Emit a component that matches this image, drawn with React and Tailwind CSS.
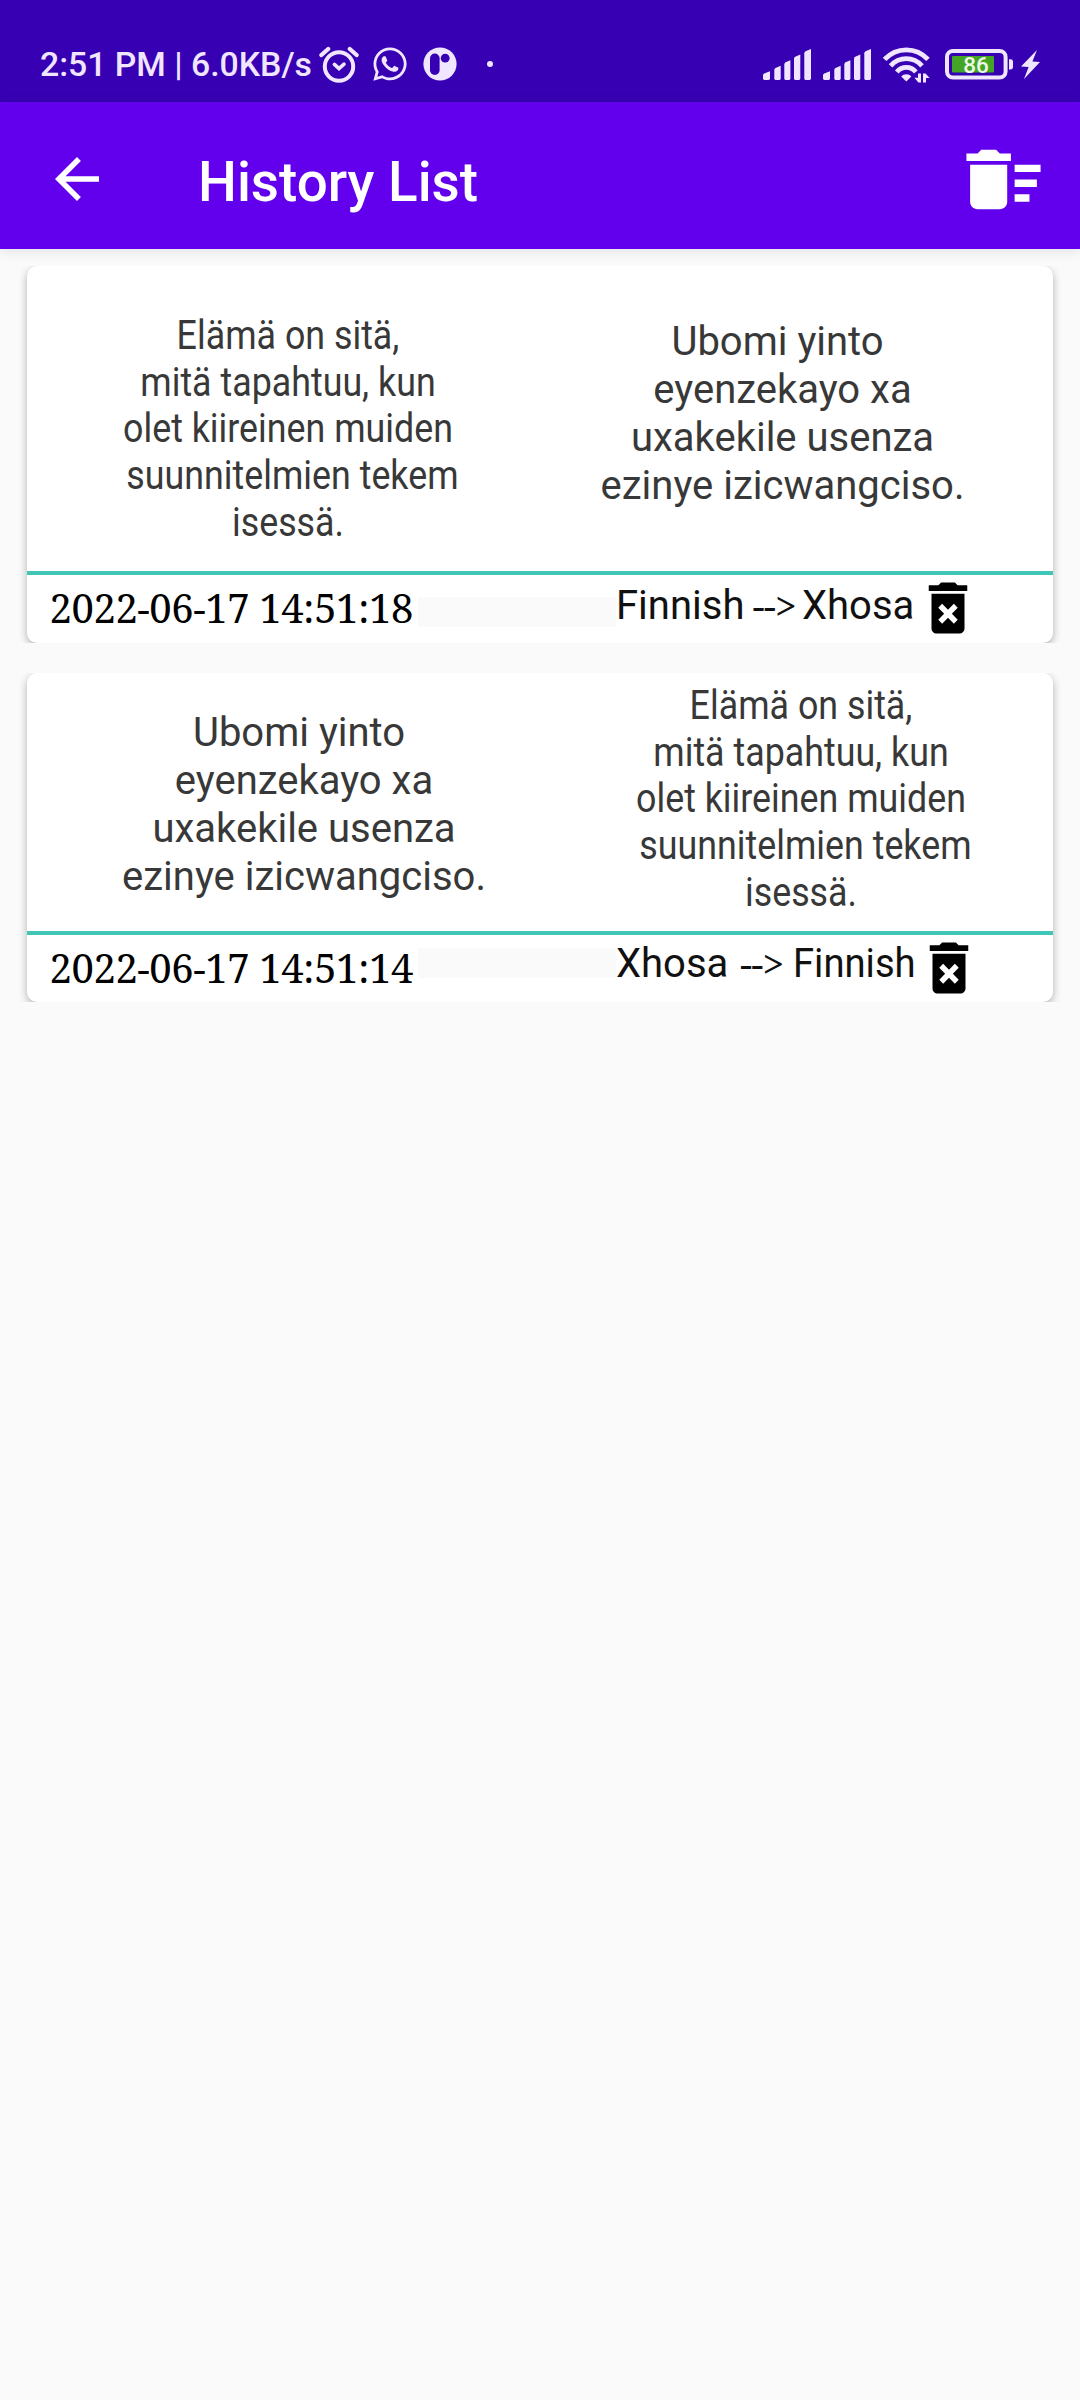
import React, { useState } from 'react'
import { FaWhatsapp } from 'react-icons/fa'
import { MdArrowBack, MdDeleteSweep } from 'react-icons/md'

const FINNISH = ['Elämä on sitä,', 'mitä tapahtuu, kun', 'olet kiireinen muiden', ' suunnitelmien tekem', 'isessä.']
const XHOSA = ['Ubomi yinto ', 'eyenzekayo xa', 'uxakekile usenza', 'ezinye izicwangciso.']

const finnishText = 'text-[40px] leading-[46.7px] scale-x-[0.895]'
const xhosaText = 'text-[40px] leading-[47.9px]'

const initialHistory = [
  {
    id: 2,
    date: '2022-06-17 14:51:18',
    from: 'Finnish',
    to: 'Xhosa',
    source: FINNISH,
    target: XHOSA,
    bodyClass: 'h-[305px] grid-cols-[522px_467px]',
    sourceClass: `${finnishText} pt-[47px]`,
    targetClass: `${xhosaText} pt-[52px]`,
    footerClass: 'h-[68px]',
    stripClass: 'mt-[22px] w-[198px]',
    labelClass: 'mt-[11px]',
    fromClass: 'w-[136.5px]',
    arrowClass: 'w-[49.500px]',
    toClass: 'w-[113px]',
  },
  {
    id: 1,
    date: '2022-06-17 14:51:14',
    from: 'Xhosa',
    to: 'Finnish',
    source: XHOSA,
    target: FINNISH,
    bodyClass: 'h-[258px] grid-cols-[554px_440px]',
    sourceClass: `${xhosaText} pt-[36px]`,
    targetClass: `${finnishText} pt-[10px]`,
    footerClass: 'h-[67px]',
    stripClass: 'mt-[13px] w-[198px]',
    labelClass: 'mt-[9px]',
    fromClass: 'w-[124px]',
    arrowClass: 'w-[52.500px]',
    toClass: 'w-[123px] origin-left scale-x-[0.955]',
  },
]

const AlarmIcon = () => (
  <svg className="w-[40px] h-[37px]" viewBox="0 0 40 37" fill="none" stroke="currentColor">
    <circle cx="20" cy="20.5" r="14.2" strokeWidth="4" />
    <path d="M2.4 9 9.2 3M37.6 9 30.8 3" strokeWidth="4.2" strokeLinecap="round" />
    <path d="m15.4 18.4 4.6 4.2 5-4.4" strokeWidth="3.6" strokeLinecap="round" />
  </svg>
)

const AppIcon = () => (
  <svg className="w-[34px] h-[34px]" viewBox="0 0 34 34">
    <circle cx="17" cy="17" r="16.6" fill="currentColor" />
    <rect x="7" y="6.5" width="9.6" height="21.5" rx="4.8" fill="#3700b3" />
    <circle cx="22.2" cy="11.2" r="4.4" fill="#3700b3" />
  </svg>
)

const SignalIcon = () => (
  <svg className="w-[48px] h-[31px]" viewBox="0 0 48 31" fill="currentColor">
    <path d="M0 26.2Q0 25 1.2 24.5L7 22.3V29.6Q7 31 5.6 31H1.4Q0 31 0 29.6Z" />
    <path d="M11.3 21Q11.3 19.6 12.5 19L17.7 16.8V29.6Q17.7 31 16.4 31H12.6Q11.3 31 11.3 29.6Z" />
    <path d="M21.3 15.4Q21.3 14 22.5 13.3L27.4 11.2V29.6Q27.4 31 26 31H22.6Q21.3 31 21.3 29.6Z" />
    <path d="M31 9.8Q31 8.4 32.2 7.7L37.3 5.4V29.6Q37.3 31 36 31H32.3Q31 31 31 29.6Z" />
    <path d="M41.3 4.2Q41.3 3 42.5 2.2L48 0V29.6Q48 31 46.6 31H42.6Q41.3 31 41.3 29.6Z" />
  </svg>
)

const WifiIcon = () => (
  <svg className="w-[47px] h-[36px]" viewBox="0 0 47 36">
    <g fill="none" stroke="currentColor" strokeWidth="4.8">
      <path d="M1.6 12.4Q10.5 2.8 23.3 2.8T45 12.4" />
      <path d="M7.6 18.8Q14 11.6 23.3 11.6T39 18.8" />
      <path d="M13.8 25Q17.6 20.4 23.3 20.4T32.8 25" />
    </g>
    <path d="M18.2 29.6Q20 27.2 23.3 27.2T28.4 29.6L23.3 34.6Z" fill="currentColor" />
    <path d="M35 26.4h3v9h-2.6l-4-4.6H35ZM40 35.4v-9h2.6l4 4.6H43v4.4Z" fill="currentColor" />
  </svg>
)

const BatteryIcon = () => (
  <svg className="w-[69px] h-[31px]" viewBox="0 0 69 31">
    <rect x="2" y="2" width="58.6" height="26.6" rx="6" fill="none" stroke="currentColor" strokeWidth="4" />
    <path d="M64 10.2h1.4q2.6 0 2.6 2.6v5q0 2.6-2.6 2.6H64Z" fill="currentColor" />
    <rect x="7" y="7" width="42" height="16.4" rx="1" fill="#43a526" />
    <text x="31" y="23.6" textAnchor="middle" fill="#eef8e8" className="font-['Roboto'] text-[22.5px] font-medium">
      86
    </text>
  </svg>
)

const TrashIcon = () => (
  <svg className="w-[66px] h-[68px]" viewBox="0 0 24 24" preserveAspectRatio="none" fill="#000">
    <path d="M6 19.2c0 1 .8 1.8 2 1.8h8c1.2 0 2-.8 2-1.8V7H6v12.2zm2.46-7.32 1.41-1.41L12 12.59l2.12-2.12 1.41 1.41L13.41 14l2.12 2.12-1.41 1.41L12 15.41l-2.12 2.12-1.41-1.41L10.59 14l-2.13-2.12zM15.5 4l-1-1h-5l-1 1H5v2h14V4z" />
  </svg>
)

const StatusBar = () => (
  <div className="h-[102px] bg-[#3700b3] text-[#f1e6ff] flex items-start">
    <span className="ml-[40px] mt-[48px] w-[278.5px] text-[33.75px] leading-none font-medium whitespace-nowrap">
      2:51 PM | 6.0KB/s
    </span>
    <div className="mt-[46px]">
      <AlarmIcon />
    </div>
    <FaWhatsapp className="ml-[12px] mt-[45px] w-[38px] h-[38px]" />
    <div className="ml-[14px] mt-[47px]">
      <AppIcon />
    </div>
    <div className="ml-[30px] mt-[61px] w-[6px] h-[6px] rounded-full bg-[#f1e6ff]" />

    <div className="ml-auto mr-[40px] flex items-start">
      <div className="mt-[49px] flex gap-[12px]">
        <SignalIcon />
        <SignalIcon />
      </div>
      <div className="ml-[12px] mt-[47px]">
        <WifiIcon />
      </div>
      <div className="ml-[15px] mt-[49px]">
        <BatteryIcon />
      </div>
      <svg className="ml-[7px] mt-[50px] w-[19px] h-[29px]" viewBox="0 0 19 29" fill="currentColor">
        <path d="M16 0 0 16.5 7.6 17 3 29 19 12 11.4 11.5Z" />
      </svg>
    </div>
  </div>
)

const AppBar = ({ onClear }) => (
  <div className="h-[147px] bg-[#6200ee] text-white flex items-start shadow-[0_2px_12px_rgba(0,0,0,0.1)]">
    <button className="ml-[44px] mt-[44px]">
      <MdArrowBack className="w-[66px] h-[66px]" />
    </button>
    <h1 className="ml-[88px] mt-[53px] text-[54.8px] leading-[55px] font-medium">History List</h1>
    <button className="ml-auto mr-[32px] mt-[32.5px]" onClick={onClear}>
      <MdDeleteSweep className="w-[89px] h-[89px]" />
    </button>
  </div>
)

const Lines = ({ lines, className }) => (
  <div className={`text-center whitespace-pre text-[#383838] ${className}`}>
    {lines.map((line) => (
      <p key={line}>{line}</p>
    ))}
  </div>
)

const HistoryCard = ({ item, onDelete }) => (
  // The row clips the card's shadow at its top and bottom edge
  <div className="mx-[19px] px-[8px] overflow-hidden">
    <div className="bg-white rounded-[10px] shadow-[0_3px_9px_rgba(0,0,0,0.3)]">
      <div className={`grid ${item.bodyClass}`}>
        <Lines lines={item.source} className={item.sourceClass} />
        <Lines lines={item.target} className={item.targetClass} />
      </div>
      <div className="h-[4px] bg-[#40c6b6]" />
      <div className={`flex items-start text-[40px] leading-none text-[#111111] whitespace-nowrap ${item.footerClass}`}>
        <span className="ml-[22.5px] mt-[13px] w-[368.5px] tracking-[-0.4px] text-black font-['Noto_Serif',serif]">
          {item.date}
        </span>
        <div className={`h-[30px] bg-[#fafafa] ${item.stripClass}`} />
        <span className={`${item.labelClass} ${item.fromClass}`}>{item.from}</span>
        <span className={`text-[39px] leading-[38px] tracking-[-0.8px] font-['Noto_Serif',serif] ${item.labelClass} ${item.arrowClass}`}>
          {'-->'}
        </span>
        <span className={`${item.labelClass} ${item.toClass}`}>{item.to}</span>
        <button className="-mt-px" onClick={() => onDelete(item.id)}>
          <TrashIcon />
        </button>
      </div>
    </div>
  </div>
)

const App = () => {
  const [history, setHistory] = useState(initialHistory)

  const handleDelete = (id) => {
    setHistory(history.filter((item) => item.id !== id))
  }

  return (
    <div className="w-[1080px] h-[2400px] bg-[#fafafa] font-['Roboto',sans-serif]">
      <StatusBar />
      <AppBar onClear={() => setHistory([])} />
      <div className="pt-[17px] flex flex-col gap-[30px]">
        {history.map((item) => (
          <HistoryCard key={item.id} item={item} onDelete={handleDelete} />
        ))}
      </div>
    </div>
  )
}

export default App
